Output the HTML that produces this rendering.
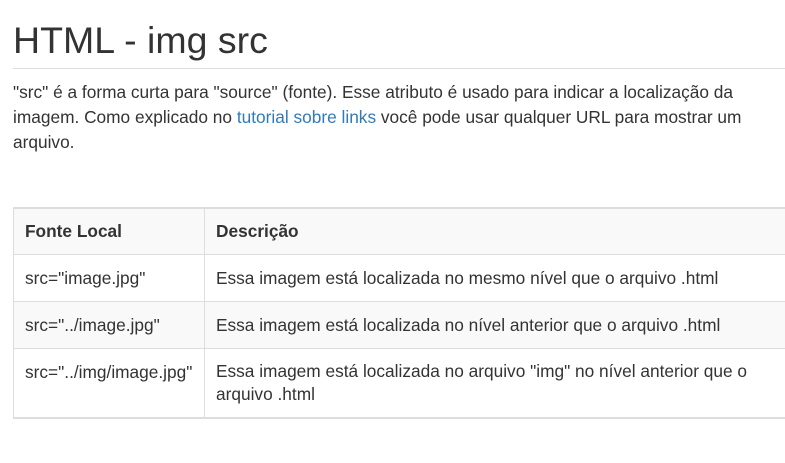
<!DOCTYPE html>
<html><head><meta charset="utf-8"><style>
body{margin:0;background:#fff;font-family:"Liberation Sans",Arial,sans-serif;color:#333;width:785px;height:463px;overflow:hidden}
h1{position:absolute;left:13px;top:18px;margin:0;font-size:37.5px;font-weight:normal;line-height:44px}
.hr{position:absolute;left:13px;top:68px;width:772px;height:1px;background:#ddd}
p{position:absolute;left:13px;top:80px;margin:0;font-size:17.3px;line-height:25px;width:765px}
a{color:#337ab7;text-decoration:none}
table{position:absolute;left:13px;top:207px;width:790px;border-collapse:collapse;font-size:17.3px;border-top:2px solid #ddd;border-bottom:2px solid #ddd;border-left:1px solid #ddd}
td,th{padding:11px 11px 11px;text-align:left;vertical-align:top;line-height:24px;border-top:1px solid #ddd}
th{font-weight:bold;background:#f9f9f9;line-height:23px}
td:first-child,th:first-child{width:168px;border-right:1px solid #ddd;white-space:nowrap}
tr.s td{background:#f9f9f9}
td.two{line-height:23px}
</style></head><body>
<h1>HTML - img src</h1>
<div class="hr"></div>
<p>"src" é a forma curta para "source" (fonte). Esse atributo é usado para indicar a localização da<br>imagem. Como explicado no <a>tutorial sobre links</a> você pode usar qualquer URL para mostrar um<br>arquivo.</p>
<table>
<tr><th>Fonte Local</th><th>Descrição</th></tr>
<tr><td>src="image.jpg"</td><td>Essa imagem está localizada no mesmo nível que o arquivo .html</td></tr>
<tr class="s"><td>src="../image.jpg"</td><td>Essa imagem está localizada no nível anterior que o arquivo .html</td></tr>
<tr><td>src="../img/image.jpg"</td><td class="two">Essa imagem está localizada no arquivo "img" no nível anterior que o<br>arquivo .html</td></tr>
</table>
</body></html>
